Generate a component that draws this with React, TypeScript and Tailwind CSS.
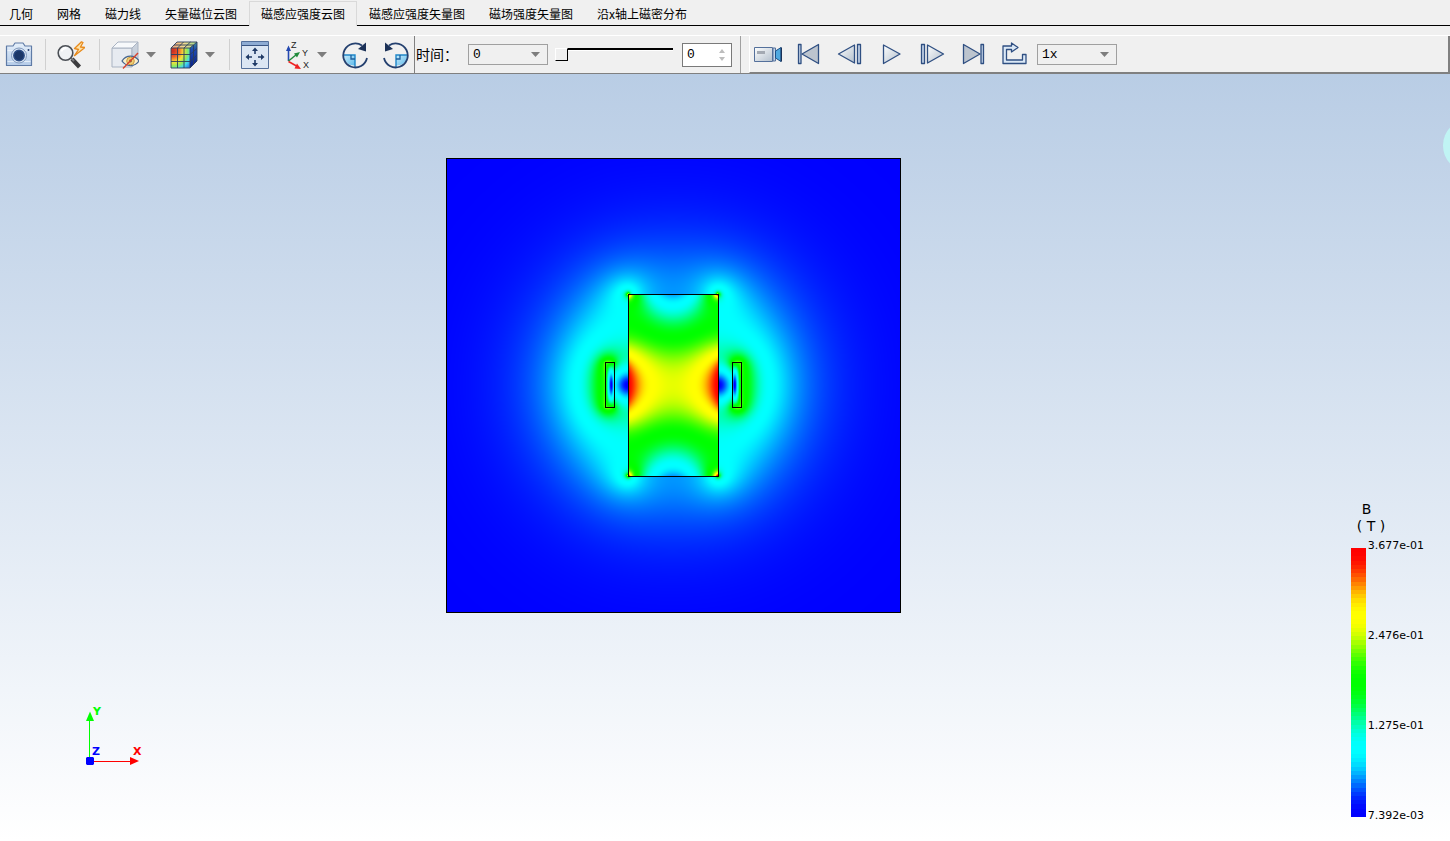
import { useLayoutEffect, useRef, useState } from "react";
import type { ReactNode } from "react";
import clsx from "clsx";

const TABS = [
  "几何",
  "网格",
  "磁力线",
  "矢量磁位云图",
  "磁感应强度云图",
  "磁感应强度矢量图",
  "磁场强度矢量图",
  "沿x轴上磁密分布",
];

const LEGEND_LABELS = ["3.677e-01", "2.476e-01", "1.275e-01", "7.392e-03"];
const LEGEND_BANDS = 64;

// blue -> cyan -> green -> yellow -> red, eased between the stops
function colorAt(value: number): [number, number, number] {
  const t = Math.max(0, Math.min(1, value)) * 4;
  const seg = Math.min(3, Math.floor(t));
  const up = Math.round((255 * (1 - Math.cos(Math.PI * (t - seg)))) / 2);
  if (seg === 0) return [0, up, 255];
  if (seg === 1) return [0, 255, 255 - up];
  if (seg === 2) return [up, 255, 0];
  return [255, 255 - up, 0];
}

// Quarter model, one cell per pixel, measured from the centre of the domain
const HALF = 227;
const CORE = { x: 45, y: 91, mu: 1000 };
const COIL = { x0: 59, x1: 68, y: 23 };

// far-field potential of a 2D dipole, used for the open boundary
const dipole = (x: number, y: number) => x / (x * x + y * y);

// Solves div(nu grad A) = -J by SOR and returns |B| for every cell
function solveField() {
  const n = HALF + 1;
  const a = new Float64Array(n * n);
  const nu = (i: number, j: number) => (i < CORE.x && j < CORE.y ? 1 / CORE.mu : 1);
  const current = (i: number, j: number) =>
    i >= COIL.x0 && i < COIL.x1 && j < COIL.y ? 0.25 : 0;

  const e = new Float64Array(n * n);
  const w = new Float64Array(n * n);
  const s = new Float64Array(n * n);
  const t = new Float64Array(n * n);
  const src = new Float64Array(n * n);
  for (let j = 0; j < HALF; j++) {
    const jm = j === 0 ? 0 : j - 1;
    for (let i = 1; i < HALF; i++) {
      const k = j * n + i;
      const east = (nu(i, j) + nu(i, jm)) / 2;
      const west = (nu(i - 1, j) + nu(i - 1, jm)) / 2;
      const north = (nu(i, j) + nu(i - 1, j)) / 2;
      const south = (nu(i, jm) + nu(i - 1, jm)) / 2;
      const sum = east + west + north + south;
      e[k] = east / sum;
      w[k] = west / sum;
      t[k] = north / sum;
      s[k] = south / sum;
      src[k] =
        (current(i, j) + current(i - 1, j) + current(i, jm) + current(i - 1, jm)) / sum;
    }
  }

  const sideRatio = Array.from({ length: n }, (_, j) => dipole(HALF, j) / dipole(HALF - 1, j));
  const topRatio = Array.from({ length: n }, (_, i) =>
    i === 0 ? 0 : dipole(i, HALF) / dipole(i, HALF - 1)
  );

  const omega = 2 / (1 + Math.sin(Math.PI / (HALF * 2)));
  for (let pass = 0; pass < 2200; pass++) {
    for (let j = 0; j < HALF; j++) {
      for (let i = 1; i < HALF; i++) {
        const k = j * n + i;
        const below = j === 0 ? a[k + n] : a[k - n];
        const next = e[k] * a[k + 1] + w[k] * a[k - 1] + t[k] * a[k + n] + s[k] * below + src[k];
        a[k] += omega * (next - a[k]);
      }
      a[j * n + HALF] = a[j * n + HALF - 1] * sideRatio[j];
    }
    for (let i = 1; i <= HALF; i++) {
      a[HALF * n + i] = a[(HALF - 1) * n + i] * topRatio[i];
    }
  }

  const b = new Float64Array(HALF * HALF);
  for (let j = 0; j < HALF; j++) {
    for (let i = 0; i < HALF; i++) {
      const k = j * n + i;
      const dx = (a[k + 1] - a[k] + a[k + n + 1] - a[k + n]) / 2;
      const dy = (a[k + n] - a[k] + a[k + n + 1] - a[k + 1]) / 2;
      b[j * HALF + i] = Math.hypot(dx, dy);
    }
  }
  return b;
}

function FieldPlot() {
  const ref = useRef<HTMLCanvasElement>(null);

  useLayoutEffect(() => {
    const ctx = ref.current?.getContext("2d");
    if (!ctx) return;
    const b = solveField();
    const max = b[CORE.x - 1];
    const size = HALF * 2;
    const image = ctx.createImageData(size, size);
    for (let y = 0; y < size; y++) {
      const j = y < HALF ? HALF - 1 - y : y - HALF;
      for (let x = 0; x < size; x++) {
        const i = x < HALF ? HALF - 1 - x : x - HALF;
        const [r, g, bl] = colorAt((b[j * HALF + i] / max - 0.02) / 0.98);
        const p = (y * size + x) * 4;
        image.data[p] = r;
        image.data[p + 1] = g;
        image.data[p + 2] = bl;
        image.data[p + 3] = 255;
      }
    }
    ctx.putImageData(image, 0, 0);
  }, []);

  return (
    <div className="relative w-[455px] h-[455px] shrink-0">
      <canvas ref={ref} width={454} height={454} className="block w-[454px] h-[454px]" />
      <svg
        viewBox="0 0 455 455"
        className="absolute inset-0 w-full h-full"
        fill="none"
        stroke="#000"
        shapeRendering="crispEdges"
      >
        <rect x="0.5" y="0.5" width="454" height="454" />
        <rect x="182.5" y="136.5" width="90" height="182" />
        <rect x="159.5" y="204.5" width="9" height="45" />
        <rect x="286.5" y="204.5" width="9" height="45" />
      </svg>
    </div>
  );
}

function Legend() {
  return (
    <div className="absolute right-[26px] bottom-[19px] font-['DejaVu_Sans',sans-serif] text-black">
      <div className="mb-[5px] pl-[6px] text-[14px] leading-[17px]">
        <div className="pl-[5px]">B</div>
        <div className="whitespace-pre">( T )</div>
      </div>
      <div className="flex items-start gap-[2px]">
        <svg
          viewBox={`0 0 15 ${LEGEND_BANDS}`}
          preserveAspectRatio="none"
          shapeRendering="crispEdges"
          className="mt-2 w-[15px] h-[269px]"
        >
          {Array.from({ length: LEGEND_BANDS }, (_, i) => (
            <rect
              key={i}
              x="0"
              y={i}
              width="15"
              height="1"
              fill={`rgb(${colorAt(1 - i / (LEGEND_BANDS - 1)).join(",")})`}
            />
          ))}
        </svg>
        <div className="flex flex-col justify-between h-[282px] text-[11px] leading-3">
          {LEGEND_LABELS.map((label) => (
            <span key={label}>{label}</span>
          ))}
        </div>
      </div>
    </div>
  );
}

function Triad() {
  return (
    <svg
      width="64"
      height="64"
      viewBox="0 0 64 64"
      className="absolute left-[84px] bottom-[73px] font-['DejaVu_Sans',sans-serif] text-[11px] font-bold"
    >
      <path d="M5.5 57V14" stroke="#00ff00" />
      <path d="M6 7.500L10 17H2z" fill="#00ff00" />
      <path d="M6 57.500H46" stroke="#f00" />
      <path d="M55 57L46 53V61z" fill="#f00" />
      <path d="M3 53h6l1 1v6l-1 1H3l-1-1v-6z" fill="#00f" />
      <text x="9" y="11" fill="#00ff00">Y</text>
      <text x="8" y="51" fill="#00f">Z</text>
      <text x="49" y="51" fill="#f00">X</text>
    </svg>
  );
}

function ToolButton({
  label,
  className,
  children,
}: {
  label: string;
  className?: string;
  children: ReactNode;
}) {
  return (
    <button
      type="button"
      aria-label={label}
      className={clsx("flex items-center w-7 h-7 shrink-0", className)}
    >
      <svg width="28" height="28" viewBox="0 0 28 28" fill="none" className="shrink-0">
        {children}
      </svg>
    </button>
  );
}

function MenuArrow({ label }: { label: string }) {
  return (
    <button type="button" aria-label={label} className="ml-[7px] mr-[14px] shrink-0">
      <svg width="10" height="6" viewBox="0 0 10 6" className="block">
        <path d="M0 0H10L5 5.500z" fill="#7d7d7d" />
      </svg>
    </button>
  );
}

function Separator() {
  return <div className="w-px h-[31px] mr-[11px] bg-[#d0d0d0] shrink-0" />;
}

function Dropdown({ id, label, options }: { id: string; label?: string; options: string[] }) {
  return (
    <div className="relative shrink-0">
      <select
        id={id}
        aria-label={label}
        className="block w-20 h-[21px] pl-1 appearance-none border border-[#a0a0a0] bg-[#f0f0f0] font-['Liberation_Mono',monospace] text-[13px] leading-[19px] text-black"
      >
        {options.map((option) => (
          <option key={option}>{option}</option>
        ))}
      </select>
      <svg
        width="9"
        height="5"
        viewBox="0 0 9 5"
        className="absolute right-2 top-2 pointer-events-none"
      >
        <path d="M0 0H9L4.500 5z" fill="#7d7d7d" />
      </svg>
    </div>
  );
}

function Gradients() {
  return (
    <svg width="0" height="0" className="absolute">
      <defs>
        <linearGradient id="steel" x1="0" y1="0" x2="1" y2="1">
          <stop offset="0" stopColor="#fdfefe" />
          <stop offset="1" stopColor="#b3bfcc" />
        </linearGradient>
        <linearGradient id="body" x1="0" y1="0" x2="0" y2="1">
          <stop offset="0" stopColor="#e6f0fb" />
          <stop offset="1" stopColor="#b4cbe8" />
        </linearGradient>
        <linearGradient id="sky" x1="0" y1="0" x2="1" y2="1">
          <stop offset="0" stopColor="#c9ecfb" />
          <stop offset="1" stopColor="#5db9ea" />
        </linearGradient>
        <radialGradient id="jet" cx="0.100" cy="0.150" r="1.150">
          <stop offset="0" stopColor="#c92a22" />
          <stop offset="0.250" stopColor="#ee5a2a" />
          <stop offset="0.480" stopColor="#f8e038" />
          <stop offset="0.660" stopColor="#8eea5c" />
          <stop offset="0.820" stopColor="#40dcee" />
          <stop offset="1" stopColor="#2f7fe8" />
        </radialGradient>
        <linearGradient id="jetTop" x1="0" y1="0" x2="1" y2="0">
          <stop offset="0" stopColor="#ef9d78" />
          <stop offset="0.500" stopColor="#f1dc90" />
          <stop offset="1" stopColor="#9fd98a" />
        </linearGradient>
        <linearGradient id="jetSide" x1="0" y1="0" x2="0" y2="1">
          <stop offset="0" stopColor="#3f8f9a" />
          <stop offset="0.300" stopColor="#1c49b4" />
          <stop offset="1" stopColor="#0a1f86" />
        </linearGradient>
      </defs>
    </svg>
  );
}

function ViewTools() {
  return (
    <div className="flex items-center pl-[5px]">
      <ToolButton label="截图" className="mr-3">
        <path
          d="M1.500 5H8l2-3h8L20 5h6.500v19.500h-25z"
          fill="url(#body)"
          stroke="#5f7ba6"
          strokeWidth="1.200"
          strokeLinejoin="round"
        />
        <path d="M2.500 9.500h23M2.500 20.500h23" stroke="#f4f8fd" strokeWidth="1" opacity="0.700" />
        <circle cx="14" cy="14.500" r="7.500" fill="#dce8f6" stroke="#7f97bb" />
        <circle cx="14" cy="14.500" r="5.200" fill="#1c3768" stroke="#2c4c84" strokeWidth="1.400" />
        <circle cx="23.500" cy="9" r="1" fill="#2a4474" />
      </ToolButton>
      <Separator />
      <ToolButton label="查询" className="w-[30px] mr-3">
        <path d="M15 18l7.500 8" stroke="#3c3c3e" strokeWidth="4.200" />
        <path d="M14 17l3 3" stroke="#77787c" strokeWidth="2" />
        <circle cx="8.500" cy="12" r="7.300" fill="#eff2f5" stroke="#4b4f55" strokeWidth="1.600" />
        <path d="M4.500 10.500a5 5 0 0 1 5-3.500" stroke="#fff" strokeWidth="1.800" />
        <path
          d="M24.500 0.800L17.500 7.500l4 1-4 6.200L28 6.500l-4.500-.500L26 1.500z"
          fill="#fde2a8"
          stroke="#e88a1c"
          strokeWidth="1.300"
          strokeLinejoin="round"
        />
      </ToolButton>
      <Separator />
      <ToolButton label="显示隐藏">
        <path d="M1 7h20v19H1z" fill="#e7ebf1" stroke="#a9b3c2" />
        <path d="M1 7l6-6h20l-6 6z" fill="#f7f9fb" stroke="#a9b3c2" strokeLinejoin="round" />
        <path d="M21 7l6-6v18l-6 7z" fill="#c9d1dc" stroke="#a9b3c2" strokeLinejoin="round" />
        <path
          d="M11 20c4-6.500 13-6.500 17 0-4 6-13 6-17 0z"
          fill="#fbeecb"
          stroke="#44648f"
          strokeWidth="1.300"
        />
        <circle cx="19.500" cy="20" r="3.800" fill="#f2cf79" stroke="#c99c40" />
        <circle cx="19.500" cy="20" r="1.400" fill="#7b6231" />
        <path d="M12 27.500L27 12" stroke="#d8412c" strokeWidth="1.400" />
      </ToolButton>
      <MenuArrow label="显示隐藏选项" />
      <ToolButton label="云图">
        <path d="M1 7h19v20H1z" fill="url(#jet)" />
        <path d="M1 7l6-6h20l-7 6z" fill="url(#jetTop)" />
        <path d="M20 7l7-6v19l-7 7z" fill="url(#jetSide)" />
        <path
          d="M1 7h19v20H1zM7.500 7v20M14 7v20M1 13.500h19M1 20.500h19M1 7l6-6h20l-7 6M7.500 7l6-6M14 7l6.500-6M4 4h19.500M27 1v19l-7 7M23.500 4v19.500M20 13.500l7-6M20 20.500l7-6.500"
          stroke="#2b3d5c"
          strokeWidth="0.900"
        />
      </ToolButton>
      <MenuArrow label="云图选项" />
      <Separator />
      <ToolButton label="适应窗口">
        <path d="M0.500 0.500h27v27H0.500z" fill="#dbe6f3" stroke="#54709b" />
        <path d="M1 1h26v3H1z" fill="#8eacd3" />
        <path d="M1 4.500h26" stroke="#3a5582" />
        <path d="M14 13V9M14 19v4M11 16H7M17 16h4" stroke="#1f3a66" strokeWidth="1.600" />
        <path
          d="M14 6.500l3 3.500h-6zM14 25.500l3-3.500h-6zM4.500 16L8 13v6zM23.500 16L20 13v6z"
          fill="#1f3a66"
        />
      </ToolButton>
      <ToolButton label="视图方向" className="ml-[13px]">
        <path d="M6.500 20V7" stroke="#2448b0" strokeWidth="1.600" />
        <path d="M6.500 4.500L9 10H4z" fill="#2448b0" />
        <path d="M6.500 20l8-6.500" stroke="#218a3c" strokeWidth="1.500" />
        <path d="M18 11l-6 1.500 3 4z" fill="#218a3c" />
        <path d="M6.500 20.500l8 4.500" stroke="#ee2323" strokeWidth="1.500" />
        <path d="M19 28l-6.500-.500 2.500-5z" fill="#ee2323" />
        <g fill="#222" className="font-['Liberation_Sans',sans-serif] text-[9px]">
          <text x="9" y="7">Z</text>
          <text x="20" y="15">Y</text>
          <text x="21" y="27">X</text>
        </g>
      </ToolButton>
      <MenuArrow label="视图方向选项" />
      <ToolButton label="顺时针旋转">
        <path d="M2.500 14H14v10.500C8 25 3 21 2.500 14z" fill="url(#sky)" />
        <path d="M2 14h12v12" stroke="#1f86c8" strokeWidth="1.400" />
        <path d="M10 14v4h4" stroke="#1f5f9c" strokeWidth="1.300" />
        <path
          d="M21 4.500A12 12 0 1 0 26 17"
          stroke="#24406f"
          strokeWidth="1.800"
        />
        <path d="M25 1.500v9l-8-2.500z" fill="#1b3157" />
      </ToolButton>
      <ToolButton label="逆时针旋转" className="ml-[13px]">
        <path d="M25.500 14H14v10.500C20 25 25 21 25.500 14z" fill="url(#sky)" />
        <path d="M26 14H14v12" stroke="#1f86c8" strokeWidth="1.400" />
        <path d="M18 14v4h-4" stroke="#1f5f9c" strokeWidth="1.300" />
        <path d="M7 4.500A12 12 0 1 1 2 17" stroke="#24406f" strokeWidth="1.800" />
        <path d="M3 1.500v9l8-2.500z" fill="#1b3157" />
      </ToolButton>
    </div>
  );
}

function TimeTools() {
  const [step, setStep] = useState(0);

  return (
    <div className="flex items-center ml-1 pl-px h-full border-l border-[#808080]">
      <label
        htmlFor="time"
        className="w-[52px] pb-[2px] shrink-0 whitespace-nowrap text-[14px] leading-5"
      >
        时间：
      </label>
      <Dropdown id="time" options={["0"]} />
      <div className="flex ml-[7px] pb-[10px]">
        <input
          type="range"
          aria-label="时间步"
          min={0}
          max={10}
          value={step}
          onChange={(e) => setStep(Number(e.target.value))}
          className="block w-[118px] h-[3px] appearance-none bg-transparent [&::-webkit-slider-runnable-track]:h-[3px] [&::-webkit-slider-runnable-track]:bg-black [&::-webkit-slider-runnable-track]:border-b [&::-webkit-slider-runnable-track]:border-white [&::-webkit-slider-thumb]:appearance-none [&::-webkit-slider-thumb]:w-[13px] [&::-webkit-slider-thumb]:h-[13px] [&::-webkit-slider-thumb]:bg-[#f0f0f0] [&::-webkit-slider-thumb]:border [&::-webkit-slider-thumb]:border-t-white [&::-webkit-slider-thumb]:border-l-white [&::-webkit-slider-thumb]:border-r-black [&::-webkit-slider-thumb]:border-b-black"
        />
      </div>
      <div className="relative ml-[9px] mr-2">
        <input
          type="number"
          aria-label="当前步"
          min={0}
          max={10}
          value={step}
          onChange={(e) => setStep(Number(e.target.value))}
          className="block w-[50px] h-6 pl-1 border border-[#7a7a7a] bg-white font-['Liberation_Mono',monospace] text-[13px] text-black appearance-none [&::-webkit-inner-spin-button]:appearance-none"
        />
        <svg
          width="6"
          height="12"
          viewBox="0 0 6 12"
          fill="#bdbdbd"
          className="absolute right-[7px] top-[6px] pointer-events-none"
        >
          <path d="M0 4h6L3 0zM0 8h6L3 12z" />
        </svg>
      </div>
    </div>
  );
}

function PlaybackTools() {
  const line = { stroke: "#2f4f82", strokeWidth: 1.3, strokeLinejoin: "round" as const };

  return (
    <div className="flex flex-1 h-full border-l border-[#a0a0a0] pl-2">
      <div className="flex flex-1 items-center gap-[13px] pl-1 border-l border-l-white border-r-2 border-r-[#808080] border-b border-b-[#808080]">
        <ToolButton label="录制">
          <path d="M0.500 7.500h18v14H0.500z" fill="url(#steel)" stroke="#54709b" />
          <path d="M3 11h8v3H3z" fill="#a3a9b2" />
          <path d="M19 8h2.500v13H19z" fill="#c7d7ea" stroke="#54709b" />
          <path d="M21.500 11l5.500-3.500v14L21.500 18z" fill="#4fa9e0" stroke="#1d4f86" />
          <path d="M27.500 7.500v14" stroke="#1b3157" strokeWidth="1.500" />
        </ToolButton>
        <ToolButton label="首帧">
          <path d="M3.500 4.500h2.500v19H3.500z" fill="#c3d3e8" {...line} />
          <path d="M7 14L23.500 4.500v19z" fill="#bcc4ce" {...line} />
        </ToolButton>
        <ToolButton label="上一帧">
          <path d="M2.500 14L18.500 5v18z" fill="url(#steel)" {...line} />
          <path d="M21.500 4.500h3v19h-3z" fill="#c3d3e8" {...line} />
        </ToolButton>
        <ToolButton label="播放">
          <path d="M6.500 5v18.500L23 14z" fill="url(#steel)" {...line} />
        </ToolButton>
        <ToolButton label="下一帧">
          <path d="M3.500 4.500h3v19h-3z" fill="#c3d3e8" {...line} />
          <path d="M9.500 5v18L25.500 14z" fill="url(#steel)" {...line} />
        </ToolButton>
        <ToolButton label="末帧">
          <path d="M4.500 4.500v19L21 14z" fill="#bcc4ce" {...line} />
          <path d="M22 4.500h2.500v19H22z" fill="#c3d3e8" {...line} />
        </ToolButton>
        <ToolButton label="循环">
          <path
            d="M3 23.500V6h8.500V3l6.500 4.500-6.500 4.500V9.500H6.500V20H22.500V14.500H26v9z"
            fill="#dbe8f6"
            {...line}
          />
        </ToolButton>
        <div className="-ml-1">
          <Dropdown id="speed" label="播放速度" options={["1x", "2x", "4x"]} />
        </div>
      </div>
    </div>
  );
}

export default function App() {
  const [active, setActive] = useState(4);

  return (
    <div className="flex flex-col min-h-screen bg-[#f0f0f0] font-['Noto_Sans_CJK_SC',sans-serif] text-black">
      <Gradients />
      <nav className="flex h-[26px] pt-px">
        {TABS.map((tab, index) => (
          <button
            key={tab}
            type="button"
            onClick={() => setActive(index)}
            className={clsx(
              "text-[12px] leading-6 whitespace-nowrap first:pl-[9px]",
              index === active
                ? "px-[11px] border border-b-0 border-[#d9d9d9]"
                : "px-3 pt-px border-b border-black"
            )}
          >
            {tab}
          </button>
        ))}
        <div className="flex-1 border-b border-black" />
      </nav>

      <div className="flex items-center h-[39px] mt-[9px] border-t border-t-white border-b border-b-[#808080]">
        <ViewTools />
        <TimeTools />
        <PlaybackTools />
      </div>

      <main className="relative flex flex-1 justify-center pt-[84px] pr-[103px] overflow-hidden bg-linear-to-b from-[#b9cde5] to-white">
        <FieldPlot />
        <Triad />
        <Legend />
        <div className="absolute top-[45px] -right-[46px] w-[53px] h-[53px] rounded-full bg-[#c0f4f4]" />
      </main>
    </div>
  );
}
